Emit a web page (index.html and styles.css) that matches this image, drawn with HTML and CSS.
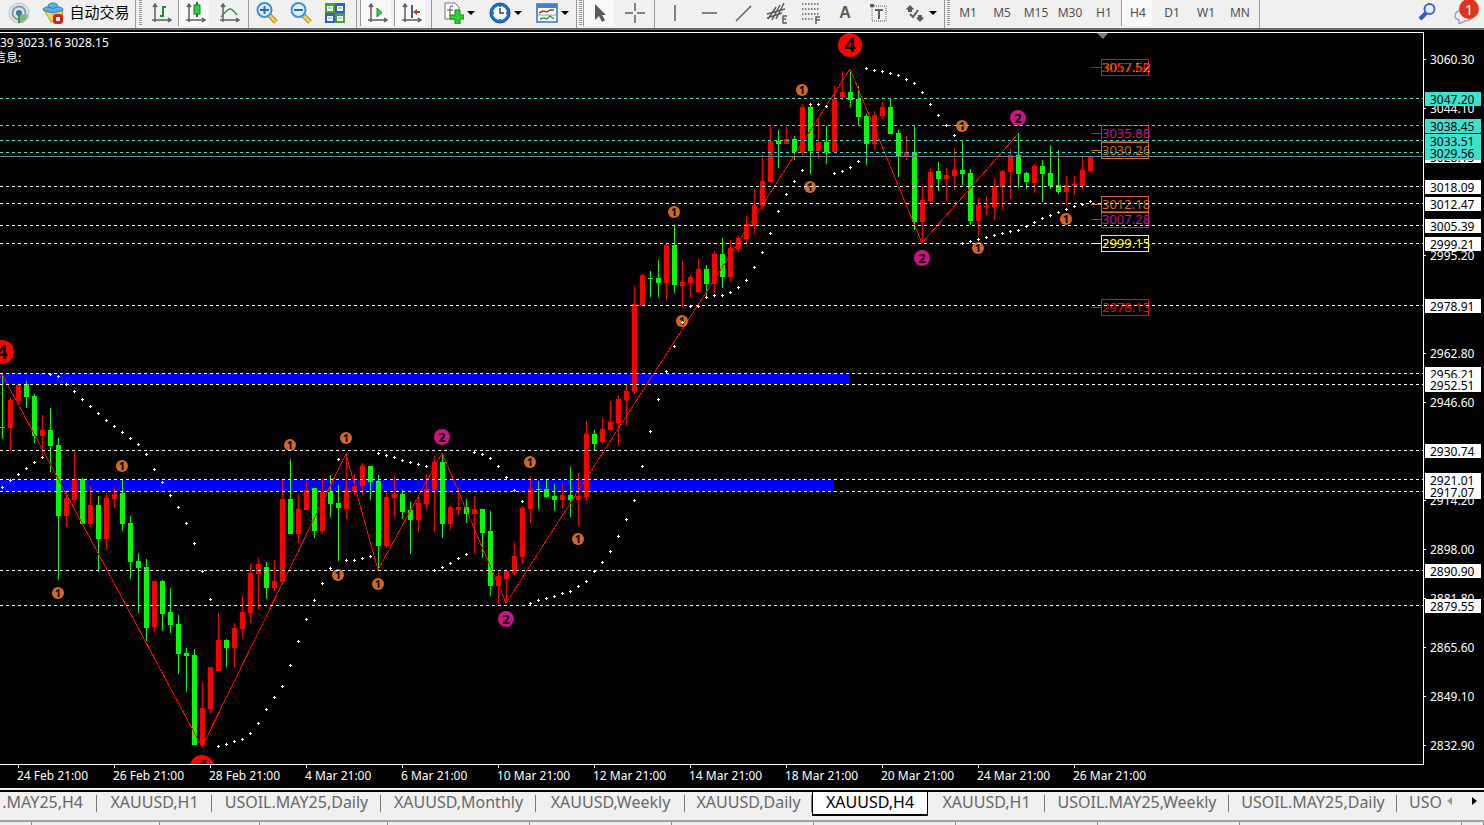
FILE: index.html
```html
<!DOCTYPE html>
<html lang="zh-CN">
<head>
<meta charset="utf-8">
<title>XAUUSD,H4</title>
<link rel="stylesheet" href="styles.css">
</head>
<body>
<header class="toolbar">
  <button class="tool first" aria-label="Signals"><svg class="icon" viewBox="0 0 22 22"><circle cx="11" cy="11" r="10" fill="#dfe6ea" stroke="#b7c2ca"/><circle cx="11" cy="11" r="6.500" fill="none" stroke="#7f9ab0" stroke-width="2"/><path d="M12 12l8 1a10 10 0 0 1-8 8z" fill="#7dba7f"/><circle cx="11" cy="11" r="3" fill="#3e74a8"/><path d="M11 11v10" stroke="#3a9648" stroke-width="2"/></svg></button>
  <button class="tool auto"><svg class="icon" viewBox="0 0 22 22"><path d="M2 8l7 12 10-2 2-9z" fill="#f2ce54" stroke="#c99a28"/><path d="M1 8q0-3 5-3q0-4 5-4t5 4q5 0 5 3q-10 5-20 0z" fill="#5db1e2" stroke="#2e7fb5"/><path d="M6 5q5 3 10 0" fill="none" stroke="#2e7fb5"/><rect x="11" y="12" width="10" height="10" rx="3" fill="#dc2313"/><rect x="14" y="15" width="4" height="4" fill="#fff"/></svg><span>自动交易</span></button>
  <i class="rule auto-end"></i><i class="grip"></i>
  <button class="tool" aria-label="Bar chart"><svg class="icon" viewBox="0 0 22 22"><g fill="none" stroke="#5f5f5f" stroke-width="1.500"><path d="M5 20V3M2 18h18M3 5l2-3 2 3M18 16l3 2-3 2"/><path d="M10 14h3V5h3M13 14" stroke="#218a2b" stroke-width="2"/></g></svg></button>
  <button class="tool on" aria-label="Candlesticks"><svg class="icon" viewBox="0 0 22 22"><g fill="none" stroke="#5f5f5f" stroke-width="1.500"><path d="M5 20V3M2 18h18M3 5l2-3 2 3M18 16l3 2-3 2"/></g><path d="M13 0v15" stroke="#147a20" stroke-width="2"/><rect x="10" y="3" width="6" height="9" fill="#34d043" stroke="#147a20"/></svg></button>
  <button class="tool" aria-label="Line chart"><svg class="icon" viewBox="0 0 22 22"><g fill="none" stroke="#5f5f5f" stroke-width="1.500"><path d="M5 20V3M2 18h18M3 5l2-3 2 3M18 16l3 2-3 2"/><path d="M3 15C7 11 9 7 12 7s4 3 7 6" stroke="#3f8f49"/></g></svg></button>
  <i class="rule r4"></i>
  <button class="tool" aria-label="Zoom in"><svg class="icon" viewBox="0 0 22 22"><path d="M13 13l7 7" stroke="#b48412" stroke-width="5"/><path d="M13 13l7 7" stroke="#f3cf4b" stroke-width="3"/><circle cx="8.500" cy="8" r="7" fill="#dcefff" stroke="#4390d0" stroke-width="2"/><path d="M4 8h9M8.500 4v8" stroke="#2c6da8" stroke-width="2"/></svg></button>
  <button class="tool" aria-label="Zoom out"><svg class="icon" viewBox="0 0 22 22"><path d="M13 13l7 7" stroke="#b48412" stroke-width="5"/><path d="M13 13l7 7" stroke="#f3cf4b" stroke-width="3"/><circle cx="8.500" cy="8" r="7" fill="#dcefff" stroke="#4390d0" stroke-width="2"/><path d="M4 8h9" stroke="#2c6da8" stroke-width="2"/></svg></button>
  <button class="tool" aria-label="Tile windows"><svg class="icon" viewBox="0 0 22 22"><path d="M1 1h10v10H1zM11 11h10v10H11z" fill="#4ba323"/><path d="M11 1h10v10H11zM1 11h10v10H1z" fill="#2d63c8"/><path d="M3 4h6v5H3zM13 4h6v5h-6zM3 14h6v5H3zM13 14h6v5h-6z" fill="#f4f8ff"/><path d="M4 6h4M14 6h4M4 16h4M14 16h4" stroke="#8aa4bb"/></svg></button>
  <i class="rule r8"></i>
  <button class="tool on" aria-label="Auto scroll"><svg class="icon" viewBox="0 0 22 22"><g fill="none" stroke="#5f5f5f" stroke-width="1.500"><path d="M5 20V3M2 18h18M3 5l2-3 2 3M18 16l3 2-3 2"/></g><path d="M11 6v9l5-4.500z" fill="#42c84d" stroke="#1b9129"/></svg></button>
  <button class="tool on" aria-label="Chart shift"><svg class="icon" viewBox="0 0 22 22"><g fill="none" stroke="#5f5f5f" stroke-width="1.500"><path d="M5 20V3M2 18h18M3 5l2-3 2 3M18 16l3 2-3 2"/></g><path d="M12 3v13" stroke="#2d6691" stroke-width="2"/><path d="M13 10l4-3v2h3v2h-3v2z" fill="#cf3a0b"/></svg></button>
  <i class="rule r6"></i>
  <button class="tool drop" aria-label="Indicators"><svg class="icon" viewBox="0 0 22 22"><path d="M3 1h10l4 4v12H3z" fill="#fff" stroke="#777"/><path d="M11 4q-3-1-3 2v8M5 8h6" fill="none" stroke="#555"/><path d="M13 8h5v5h4v4h-4v5h-5v-5H8v-4h5z" fill="#35cf35" stroke="#0d8716"/></svg><b class="caret"></b></button>
  <button class="tool drop" aria-label="Periods"><svg class="icon" viewBox="0 0 22 22"><circle cx="11" cy="11" r="10" fill="#1f6fd0" stroke="#174f9f"/><circle cx="11" cy="11" r="7" fill="#f3f6fa"/><path d="M11 6v5h4M11 4v1M11 17v1M4 11h1M17 11h1" fill="none" stroke="#444" stroke-width="1.500"/></svg><b class="caret"></b></button>
  <button class="tool drop" aria-label="Templates"><svg class="icon" viewBox="0 0 22 22"><rect x="1" y="2" width="20" height="18" fill="#fff" stroke="#2a73c2" stroke-width="1.500"/><path d="M1 2h20v4H1z" fill="#3a83d2"/><path d="M3 11l4-2 4 1 3-2 4 0" fill="none" stroke="#a43a16" stroke-width="1.500"/><path d="M2 13h18" stroke="#89a"/><path d="M4 17l4-1 3 1 3-3 4 3" fill="none" stroke="#2d9837" stroke-width="1.500"/></svg><b class="caret"></b></button>
  <i class="rule r2"></i><i class="grip"></i>
  <button class="tool on" aria-label="Cursor"><svg class="icon" viewBox="0 0 22 22"><path d="M6 2v16l4-4 3 6 3-2-3-5h4z" fill="#595959"/></svg></button>
  <button class="tool" aria-label="Crosshair"><svg class="icon" viewBox="0 0 22 22"><path d="M12 1v8M12 13v8M2 11h8M14 11h8" stroke="#5c5c5c" stroke-width="1.500"/></svg></button>
  <i class="rule r7"></i>
  <button class="tool" aria-label="Vertical line"><svg class="icon" viewBox="0 0 22 22"><path d="M11 3v16" stroke="#5c5c5c" stroke-width="1.500"/></svg></button>
  <button class="tool" aria-label="Horizontal line"><svg class="icon" viewBox="0 0 22 22"><path d="M4 11h15" stroke="#5c5c5c" stroke-width="1.500"/></svg></button>
  <button class="tool" aria-label="Trend line"><svg class="icon" viewBox="0 0 22 22"><path d="M4 19L19 4" stroke="#5c5c5c" stroke-width="1.500"/></svg></button>
  <button class="tool" aria-label="Equidistant channel"><svg class="icon" viewBox="0 0 22 22"><g stroke="#5c5c5c" stroke-width="1.500" fill="none"><path d="M2 17L10 5M6 18L14 3M10 17L18 1M1 12l18-5M1 16l15-5"/><path d="M21 14h-4v7h4M17 17h3"/></g></svg></button>
  <button class="tool" aria-label="Fibonacci"><svg class="icon" viewBox="0 0 22 22"><path d="M2 2h18M2 7h18M2 12h18M2 17h12" stroke="#5c5c5c" stroke-width="1.500" stroke-dasharray="1.500 1.500"/><path d="M20 15h-4v7M16 18h4" fill="none" stroke="#5c5c5c" stroke-width="1.500"/></svg></button>
  <button class="tool letter">A</button>
  <button class="tool" aria-label="Text label"><svg class="icon" viewBox="0 0 22 22"><path d="M4 4h14v15H4z" fill="none" stroke="#5c5c5c" stroke-dasharray="1 1"/><path d="M2 2h4v3H2z" fill="#5c5c5c"/><path d="M7 8h8M11 8v9" stroke="#5c5c5c" stroke-width="2"/></svg></button>
  <button class="tool drop" aria-label="Arrows"><svg class="icon" viewBox="0 0 22 22"><path d="M6 3l4 4-2 1v2H4V8L2 7zM16 20l-4-4 2-1v-2h4v2l2 1z" fill="#5c5c5c"/><path d="M6 12l3 3 5-7" fill="none" stroke="#5c5c5c" stroke-width="2"/></svg><b class="caret"></b></button>
  <i class="rule r2"></i><i class="grip"></i>
  <button class="tool frame">M1</button><button class="tool frame">M5</button><button class="tool frame">M15</button><button class="tool frame">M30</button><button class="tool frame">H1</button><button class="tool frame on">H4</button><button class="tool frame">D1</button><button class="tool frame">W1</button><button class="tool frame">MN</button>
  <i class="rule r4"></i>
  <span class="spacer"></span>
  <button class="tool" aria-label="Search"><svg class="icon" viewBox="0 0 22 22"><path d="M9 11l-6 6" stroke="#2d5fc0" stroke-width="4"/><circle cx="12.500" cy="7" r="5" fill="#e6effc" stroke="#3568c8" stroke-width="2"/></svg></button>
  <button class="tool chat" aria-label="Messages"><svg class="icon" viewBox="0 0 22 22"><path d="M1 14q0-6 9-6t9 5q0 5-8 6l-6 3v-4q-4-1-4-4z" fill="#eceef2" stroke="#a0a2aa" stroke-width="1.500"/></svg><span class="badge">1</span></button>
</header>

<main class="chart">
  <section class="plot">
    <svg id="plot" width="100%" height="100%"></svg>
    <div class="info"><div>39 3023.16 3028.15</div><div class="info-cjk">信息:</div></div>
  </section>
  <aside class="prices"><svg id="prices" width="100%" height="100%"></svg></aside>
  <footer class="times">
    <span>24 Feb 21:00</span><span>26 Feb 21:00</span><span>28 Feb 21:00</span><span>4 Mar 21:00</span><span>6 Mar 21:00</span><span>10 Mar 21:00</span><span>12 Mar 21:00</span><span>14 Mar 21:00</span><span>18 Mar 21:00</span><span>20 Mar 21:00</span><span>24 Mar 21:00</span><span>26 Mar 21:00</span>
  </footer>
</main>

<nav class="tabs">
  <button class="tab cut">.MAY25,H4</button><button class="tab">XAUUSD,H1</button><button class="tab">USOIL.MAY25,Daily</button><button class="tab">XAUUSD,Monthly</button><button class="tab">XAUUSD,Weekly</button><button class="tab">XAUUSD,Daily</button><button class="tab active">XAUUSD,H4</button><button class="tab">XAUUSD,H1</button><button class="tab">USOIL.MAY25,Weekly</button><button class="tab">USOIL.MAY25,Daily</button><button class="tab last">USO</button>
  <span class="arrows"><button class="arrow left" aria-label="Scroll left"></button><button class="arrow right" aria-label="Scroll right"></button></span>
</nav>
<div class="status"><i></i><i></i><i></i><i></i><i></i><i></i><i></i><i></i><i></i><i></i><i></i><i></i></div>
<script src="chart.js"></script>
</body>
</html>
```
FILE: styles.css
```css
* { box-sizing: border-box; }
body {
  margin: 0;
  height: 100vh;
  display: flex;
  flex-direction: column;
  overflow: hidden;
  background: #f0f0f0;
  font-family: "Noto Sans", "Noto Sans CJK SC", sans-serif;
}
button { border: 0; background: none; padding: 0; margin: 0; font: inherit; color: inherit; }

.toolbar {
  display: flex;
  flex: none;
  height: 30px;
  padding-bottom: 3px;
  border-bottom: 2px solid #6a6a6a;
  background: #f0f0f0;
}
.tool {
  flex: none;
  width: 34px;
  height: 26px;
  display: flex;
  align-items: center;
  justify-content: center;
}
.tool.first { width: 38px; }
.tool.auto { width: 96px; gap: 5px; font: 15px "Noto Sans CJK SC", sans-serif; color: #000; white-space: nowrap; }
.tool.auto span { padding-bottom: 3px; }
.tool.on { background: #f9f9f9; border-left: 1px solid #999; border-right: 3px solid #f0f0f0; padding-left: 2px; }
.tool.drop { width: 47px; gap: 3px; padding-left: 1px; }
.tool.frame { font-size: 12px; color: #505050; padding-bottom: 1px; }
.tool.letter { font: bold 16px "Liberation Sans", sans-serif; color: #5c5c5c; }
.icon { width: 22px; height: 22px; flex: none; }
.caret { border: 4px solid transparent; border-top-color: #000; border-bottom: 0; }
.rule { flex: none; height: 28px; background: linear-gradient(#999, #999) center / 1px 100% no-repeat; }
.r2, .auto-end { width: 2px; }
.r4 { width: 4px; }
.r6 { width: 6px; }
.r7 { width: 7px; }
.r8 { width: 8px; }
.grip { flex: none; width: 6px; height: 26px; background: repeating-linear-gradient(#999 0 1px, #f0f0f0 1px 2px) center / 3px 100% no-repeat; }
.auto-end + .grip { width: 8px; }
.spacer { flex: 1; }
.chat { position: relative; width: 39px; }
.badge {
  position: absolute;
  right: 5px;
  top: -1px;
  width: 20px;
  height: 20px;
  border-radius: 50%;
  background: #dd3520;
  color: #fff;
  font-size: 15px;
  line-height: 20px;
}

.chart {
  flex: 1;
  min-height: 0;
  display: grid;
  grid-template-columns: 1fr 60px;
  grid-template-rows: 1fr 23px;
  padding-top: 2px;
  background: #000;
  color: #fff;
}
.plot { position: relative; overflow: hidden; border: 1px solid #fff; border-left: 0; }
.plot svg, .prices svg { display: block; }
.prices { overflow: hidden; }
.info { position: absolute; left: 0; top: 3px; font-size: 12px; line-height: 14px; }
.info-cjk { font-family: "Noto Sans CJK SC", sans-serif; margin-left: -6px; }
.times { grid-column: 1 / 3; display: flex; padding-left: 18px; font-size: 12px; line-height: 16px; white-space: nowrap; overflow: hidden; }
.times span { flex: none; width: 96px; height: 3px; border-left: 1px solid #fff; padding-top: 3px; text-indent: -2px; }
.crisp { shape-rendering: crispEdges; }
.value { font: 12px "Noto Sans", sans-serif; }
.tag { font: 13px "Noto Sans", sans-serif; }
.mark { font-family: "Noto Sans", sans-serif; font-weight: bold; text-anchor: middle; }

.tabs {
  flex: none;
  display: grid;
  grid-template-columns: 97px 115px 169px 155px 149px 127px 116px 117px 184px 168px 1fr 42px;
  height: 30px;
  margin-top: 2px;
  border-top: 2px solid #000;
  padding-bottom: 4px;
  color: #686868;
  font-size: 16px;
}
.tab { height: 22px; line-height: 20px; padding-bottom: 2px; overflow: hidden; white-space: nowrap; display: flex; justify-content: center; background: linear-gradient(#777, #777) right center / 1px 17px no-repeat; }
.tab.cut { justify-content: flex-end; padding-right: 14px; }
.tab.last { justify-content: flex-start; padding-left: 12px; background: none; }
.tab.active { height: 24px; background: #fff; color: #000; border: 1px solid #000; border-top: 0; border-bottom-width: 2px; }
.arrows { display: flex; align-items: center; justify-content: space-between; height: 18px; padding: 0 7px 0 5px; }
.arrow { border: 4px solid transparent; }
.arrow.left { border-right: 5px solid #999; border-left: 0; }
.arrow.right { border-left: 5px solid #000; border-right: 0; }
.status {
  flex: none;
  height: 5px;
  border-top: 2px solid #a0a0a0;
  display: grid;
  grid-template-columns: 32px 128px 100px 128px 142px 142px 142px 142px 142px 142px 222px 1fr;
}
.status i { border-right: 1px solid #888; }
```
FILE: chart.js
```js
// Candles are 8px apart: direction, high, low, body top, body bottom.
const candles = `g375,439,427,428 r398,451,400,428 r383,404,385,401 g381,408,384,397 g394,443,396,436 r415,455,430,436 g408,472,430,446
g438,580,445,516 r492,527,498,516 r452,503,479,500 g478,524,479,524 r486,527,505,524 g496,572,505,539 r493,549,498,539
r487,508,494,499 g479,531,493,524 g516,579,523,562 g553,613,561,568 g559,641,567,628 r581,633,581,627 g580,631,581,614
g588,633,612,625 g615,674,624,654 g648,692,653,656 g649,745,655,745 r682,747,708,745 r667,713,667,709 r613,671,640,671
g639,667,640,648 r623,668,628,648 r595,638,612,629 r564,623,573,613 r558,609,564,574 g562,599,567,588 r560,591,581,588
r480,583,499,582 g459,534,499,534 r494,543,509,534 r481,510,490,510 g488,538,488,531 r478,534,492,531 g475,517,492,504
g485,561,503,508 r453,519,490,509 r474,495,486,491 r463,496,466,486 g466,500,466,482 g475,569,481,546 r493,548,497,546
r475,517,494,498 g490,519,494,512 g502,554,510,520 r496,532,503,520 r474,509,489,504 r456,532,462,490 g454,538,462,524
r506,530,507,524 r488,515,507,510 g499,523,507,514 r496,554,509,514 g509,558,509,533 g511,596,531,586 r571,604,576,586
r571,603,571,579 r542,575,556,573 r506,564,508,557 r476,523,489,509 g481,509,489,490 g480,498,489,497 g484,511,496,500
r483,508,495,500 g467,517,495,500 r473,526,496,500 r421,501,434,497 g430,450,434,444 r418,444,429,442 r401,431,422,430
r396,445,399,423 r385,426,391,400 r286,394,304,392 r274,306,275,305 g271,297,278,279 g260,297,278,283 r244,300,245,283
g226,293,245,285 r261,307,282,286 r275,298,277,283 r259,293,269,292 g265,297,269,284 r251,293,254,284 g238,288,254,277
r240,281,248,277 r236,252,238,249 r216,243,224,239 r189,234,205,225 r155,210,181,206 r126,183,141,182 g130,168,141,144
r127,144,139,144 g136,160,139,152 r104,155,107,153 g106,174,107,151 r118,159,142,151 g126,164,142,152 r85,152,99,152
r71,100,92,97 g69,107,92,100 g86,126,99,117 g114,165,116,144 r111,150,115,144 r102,119,107,116 g99,134,107,134
g130,177,133,157 r136,160,152,157 g126,230,152,222 r186,243,200,222 r168,202,172,201 g162,191,171,179 r168,201,175,179
r148,190,170,176 g140,185,170,174 g169,225,173,221 r198,235,205,221 r196,215,206,207 r178,220,186,207 r170,210,171,187
r149,199,155,172 g133,188,155,174 g172,189,173,182 r164,193,166,183 g160,202,166,174 g145,189,173,186 g150,194,185,192
r176,205,185,192 r176,195,184,186 r156,189,170,186 r155,172,156,171`.split(/\s+/);

// Parabolic SAR, one value per candle.
const sar = [487,480,474,468,462,457,374,376,384,391,399,406,413,420,426,432,438,444,454,469,482,495,507,523,543,571,599,
746,744,741,739,733,723,709,697,686,665,641,619,600,583,568,459,560,560,558,556,453,455,457,460,462,464,466,
570,567,563,558,554,452,454,458,466,477,490,501,603,600,598,596,593,591,586,581,571,562,551,536,519,500,466,431,399,371,
346,322,306,306,297,295,295,292,287,280,267,252,233,211,194,181,170,104,104,106,173,171,167,161,
68,70,71,73,75,79,83,92,104,115,125,135,243,241,239,237,235,233,231,230,226,222,218,215,212,209,206,204,201];

const teal = '#40e0d0', white = '#fff', orange = '#d2691e', violet = '#c71585', red = '#f00', lime = '#0f0';
const levels = [[186,'3018.09'],[203,'3012.47'],[225,'3005.39'],[243,'2999.21'],[305,'2978.91'],[373,'2956.21'],[384,'2952.51'],
[450,'2930.74'],[479,'2921.01'],[491,'2917.07'],[570,'2890.90'],[605,'2879.55'],[98,'3047.20',teal],[125,'3038.45',teal],[140,'3033.51',teal],[152,'3029.56',teal]];

const rect = (x, y, w, h, fill) => `<rect x="${x}" y="${y}" width="${w}" height="${h}" fill="${fill}"/>`;
const mark = (x, y, r, fill, n, size) => `<circle cx="${x}" cy="${y}" r="${r}" fill="${fill}"/><text class="mark" x="${x}" y="${y + Math.round(size * 0.36)}" font-size="${size}">${n}</text>`;

let out = '<g transform="translate(0 -33)"><g class="crisp">';
out += rect(0, 374, 850, 10, '#00f') + rect(0, 480, 834, 11, '#00f');
candles.forEach((c, i) => {
  const [h, l, t, b] = c.slice(1).split(',').map(Number), x = 2 + i * 8, fill = c[0] === 'r' ? red : lime;
  out += rect(x, h, 1, l - h, fill) + rect(x - 2, t, 5, b - t, fill);
});
out += `<path d="M0 378L2 374L202 747L346 454L378 570L442 453L506 603L850 69L922 243L1018 134" fill="none" stroke="${red}"/></g>`;

[[122,466],[58,593],[290,445],[346,438],[338,575],[378,584],[530,462],[578,539],[674,212],[682,321],[802,90],[810,187],[962,126],[978,248],[1066,219]]
  .forEach(([x, y]) => { out += mark(x, y, 6, orange, 1, 11); });
[[442,437],[506,619],[922,258],[1018,118]].forEach(([x, y]) => { out += mark(x, y, 8, violet, 2, 13); });
[[2,352],[202,767],[850,45]].forEach(([x, y]) => { out += mark(x, y, 12, red, 4, 20); });

out += '<g class="crisp">';
sar.forEach((y, i) => { out += rect(1 + i * 8, y, 3, 1, white) + rect(2 + i * 8, y - 1, 1, 3, white); });
out += '</g>';

[[67,'3057.60',red],[133,'3035.88',violet],[150,'3030.26',orange],[219,'3007.28',violet],[204,'3012.18',orange],[243,'2999.15','#ff0'],[307,'2978.13',red]].forEach(([y, text, color]) => {
  out += `<path class="crisp" d="M1091 ${y}h10M1101 ${y - 8}h47v16h-47z" fill="none" stroke="${color}"/>`;
  if (y === 67) out += `<text class="tag" x="1102" y="${y + 5}" fill="#ff0">3057.52</text>`;
  out += `<text class="tag" x="1102" y="${y + 5}" fill="${color}">${text}</text>`;
});
out += '<g class="crisp">';
levels.forEach(([y, , color = white]) => { out += `<line x1="0" x2="100%" y1="${y}" y2="${y}" stroke="${color}" stroke-dasharray="3 3"/>`; });
out += '<rect x="0" y="156" width="100%" height="1" fill="#708090"/></g><path d="M1097 33h11l-5 6z" fill="#708090"/></g>';
document.getElementById('plot').innerHTML = out;

const label = (y, text, fill) => `<text class="value" x="6" y="${y + 5}" fill="${fill}">${text}</text>`;
let axis = '<g transform="translate(0 -32)">';
[[59,'3060.30'],[108,'3044.10'],[255,'2995.20'],[353,'2962.80'],[402,'2946.60'],[500,'2914.20'],[549,'2898.00'],[598,'2881.80'],[647,'2865.60'],[696,'2849.10'],[745,'2832.90']]
  .forEach(([y, text]) => { axis += rect(0, y, 2, 1, white) + label(y, text, white); });
axis += rect(1, 150, 56, 13, white) + label(157, '3028.15', '#000');
levels.forEach(([y, text, color = white]) => { axis += rect(1, y - 6, 56, 14, color) + label(y + 1, text, '#000'); });
document.getElementById('prices').innerHTML = axis + '</g>';
```
